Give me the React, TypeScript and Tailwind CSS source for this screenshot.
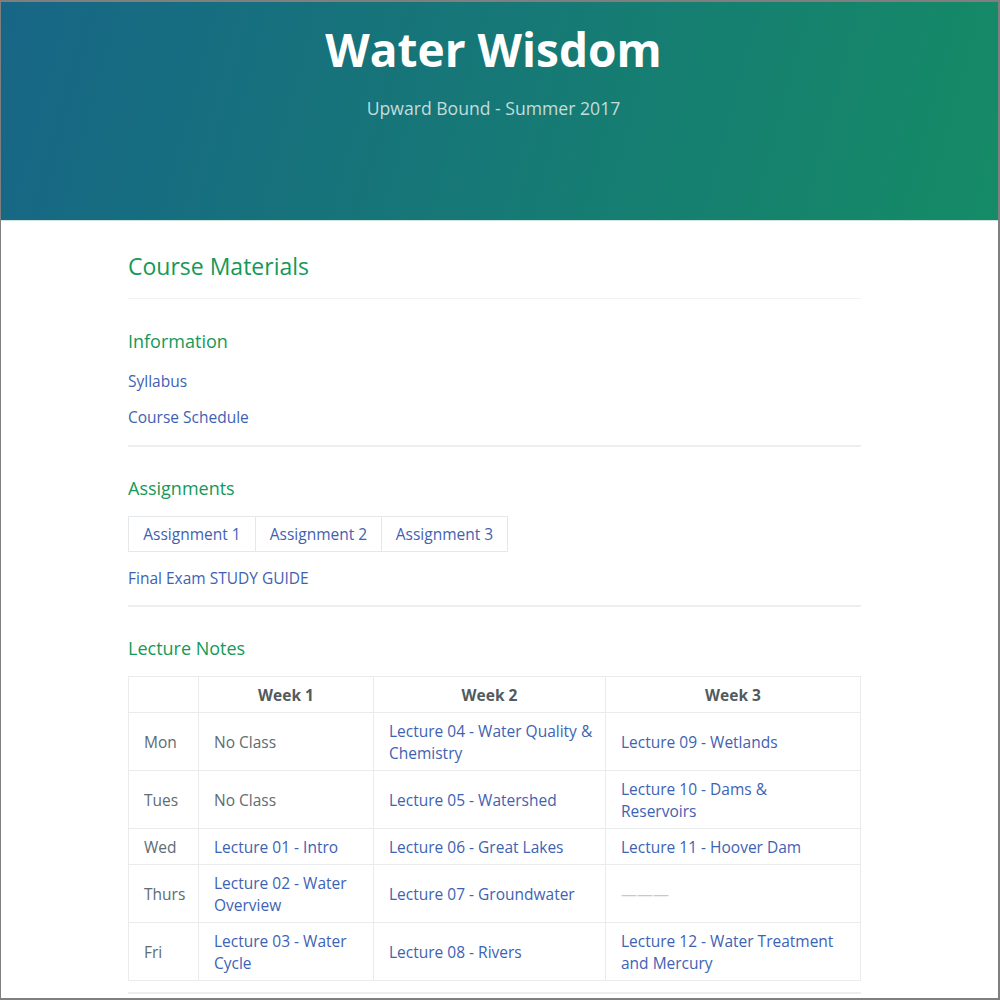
const rows = [
  {
    day: 'Mon',
    w1: { text: 'No Class', link: false },
    w2: { text: 'Lecture 04 - Water Quality & Chemistry', link: true },
    w3: { text: 'Lecture 09 - Wetlands', link: true },
  },
  {
    day: 'Tues',
    w1: { text: 'No Class', link: false },
    w2: { text: 'Lecture 05 - Watershed', link: true },
    w3: { text: 'Lecture 10 - Dams & Reservoirs', link: true },
  },
  {
    day: 'Wed',
    w1: { text: 'Lecture 01 - Intro', link: true },
    w2: { text: 'Lecture 06 - Great Lakes', link: true },
    w3: { text: 'Lecture 11 - Hoover Dam', link: true },
  },
  {
    day: 'Thurs',
    w1: { text: 'Lecture 02 - Water Overview', link: true },
    w2: { text: 'Lecture 07 - Groundwater', link: true },
    w3: { text: '———', link: false },
  },
  {
    day: 'Fri',
    w1: { text: 'Lecture 03 - Water Cycle', link: true },
    w2: { text: 'Lecture 08 - Rivers', link: true },
    w3: { text: 'Lecture 12 - Water Treatment and Mercury', link: true },
  },
]

function Cell({ text, link, wide }: { text: string; link: boolean; wide?: boolean }) {
  const cls = wide
    ? 'border border-[#e9ebec] pl-[15px] pr-[22px] py-[6.5px] align-middle'
    : 'border border-[#e9ebec] pl-[15px] pr-[12px] py-[6.5px] align-middle'
  if (text === '———') {
    return (
      <td className={cls}>
        <span className="text-[#c5c9cc] text-[16px]">———</span>
      </td>
    )
  }
  return (
    <td className={cls}>
      {link ? (
        <a href="#" className="text-[#3e62b3]">{text}</a>
      ) : (
        <span className="text-[#606c71]">{text}</span>
      )}
    </td>
  )
}

export default function App() {
  return (
    <div
      className="h-[1000px] overflow-hidden bg-white border-l border-t-2 border-r-2 border-b-2 border-[#7f7f7f]"
      style={{ fontFamily: '"Open Sans", "Liberation Sans", sans-serif' }}
    >
      <header className="h-[219px] bg-[linear-gradient(105deg,#176686,#158b66)] border-b border-[#cfe3dd] pr-[12px] text-center">
        <h1 className="pt-[18px] text-[46px] leading-[58px] font-bold text-white">Water Wisdom</h1>
        <p className="mt-[18px] text-[17.6px] leading-[24px] text-white/75">Upward Bound - Summer 2017</p>
      </header>

      <main className="w-[733px] ml-[127px] text-[15.5px] leading-[22px]">
        <h2 className="mt-[30px] text-[23px] leading-[30px] text-[#159957]">Course Materials</h2>
        <hr className="mt-[17px] border-0 border-t border-[#f1f2f3]" />

        <h3 className="mt-[30px] text-[18px] leading-[24px] text-[#159957]">Information</h3>
        <div className="mt-[17px] flex flex-col gap-[14px] text-[#3e62b3]">
          <a href="#">Syllabus</a>
          <a href="#">Course Schedule</a>
        </div>
        <hr className="mt-[17px] border-0 border-t-2 border-[#eceeef]" />

        <h3 className="mt-[29px] text-[18px] leading-[24px] text-[#159957]">Assignments</h3>
        <div className="mt-[16px] flex">
          <div className="flex border border-[#e5e8ea]">
            <a href="#" className="w-[127px] h-[34px] flex items-center justify-center text-[#3e62b3] border-r border-[#e5e8ea]">Assignment 1</a>
            <a href="#" className="w-[126px] h-[34px] flex items-center justify-center text-[#3e62b3] border-r border-[#e5e8ea]">Assignment 2</a>
            <a href="#" className="w-[125px] h-[34px] flex items-center justify-center text-[#3e62b3]">Assignment 3</a>
          </div>
        </div>
        <a href="#" className="block mt-[15px] text-[#3e62b3]">Final Exam STUDY GUIDE</a>
        <hr className="mt-[16px] border-0 border-t-2 border-[#eceeef]" />

        <h3 className="mt-[29px] text-[18px] leading-[24px] text-[#159957]">Lecture Notes</h3>
        <table className="mt-[16px] w-[732px] border-collapse table-fixed">
          <colgroup>
            <col className="w-[70px]" />
            <col className="w-[175px]" />
            <col className="w-[232px]" />
            <col className="w-[255px]" />
          </colgroup>
          <thead>
            <tr>
              <th className="border border-[#e9ebec] py-[6.5px]"></th>
              <th className="border border-[#e9ebec] py-[6.5px] font-bold text-[#525a5e]">Week 1</th>
              <th className="border border-[#e9ebec] py-[6.5px] font-bold text-[#525a5e]">Week 2</th>
              <th className="border border-[#e9ebec] py-[6.5px] font-bold text-[#525a5e]">Week 3</th>
            </tr>
          </thead>
          <tbody>
            {rows.map(r => (
              <tr key={r.day}>
                <td className="border border-[#e9ebec] px-[15px] py-[6.5px] text-[#606c71]">{r.day}</td>
                <Cell {...r.w1} />
                <Cell {...r.w2} />
                <Cell {...r.w3} wide />
              </tr>
            ))}
          </tbody>
        </table>
        <hr className="mt-[11px] border-0 border-t-2 border-[#eceeef]" />
      </main>
    </div>
  )
}
